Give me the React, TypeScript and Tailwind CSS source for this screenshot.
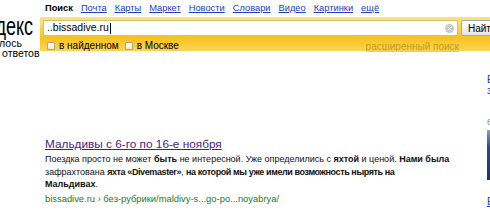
import { X } from 'lucide-react';

const navLinks = ['Почта', 'Карты', 'Маркет', 'Новости', 'Словари', 'Видео', 'Картинки'];

function Checkbox({ label }: { label: string }) {
  return (
    <label className="flex items-center gap-[4px] whitespace-nowrap">
      <span className="inline-block h-[8px] w-[8px] shrink-0 rounded-[1px] border border-[#b9a66a] bg-[linear-gradient(#fff,#ece6cf)]" />
      <span>{label}</span>
    </label>
  );
}

// bold words in the snippet are set narrower, like the original rendering
function B({ children, tight = false }: { children: React.ReactNode; tight?: boolean }) {
  return (
    <b
      className={
        tight
          ? "font-['Liberation_Sans_Narrow','Liberation_Sans',sans-serif] font-bold tracking-[-0.4px]"
          : "font-['Liberation_Sans_Narrow','Liberation_Sans',sans-serif] font-bold"
      }
    >
      {children}
    </b>
  );
}

export default function App() {
  return (
    <div className="relative h-[210px] w-[490px] overflow-hidden bg-white text-black font-['Liberation_Sans',Arial,sans-serif]">
      {/* header */}
      <div className="flex">
        <div className="w-[40px] shrink-0 overflow-hidden">
          <div className="mt-[15px] flex justify-end pr-[7px] whitespace-nowrap text-[25px] leading-[22px]">
            <span className="inline-block origin-right scale-x-[0.72] font-['Liberation_Sans_Narrow','Liberation_Sans',sans-serif]">
              Яндекс
            </span>
          </div>
          <div className="-ml-[21px] mt-[2px] whitespace-nowrap text-[10.5px] leading-[9px]">
            нашлось
          </div>
          <div className="-ml-[20px] whitespace-nowrap text-[10.5px] leading-[10px]">
            млн ответов
          </div>
        </div>
        <div className="flex-1">
          <nav className="flex h-[17px] items-center gap-[8px] whitespace-nowrap pl-[5px] text-[9.3px]">
            <span className="font-bold">Поиск</span>
            {navLinks.map((l) => (
              <a key={l} className="text-[#1a3dc1] underline">
                {l}
              </a>
            ))}
            <a className="text-[#1a3dc1] underline">ещё</a>
          </nav>
          <div className="h-[34px] border-t border-[#f3e39a] bg-[linear-gradient(#fbe07a_0px,#fbe07a_3px,#f6c21f_20px,#fcd65a_34px)] pl-[3px] pt-[2px]">
            <div className="flex items-center gap-[3px]">
              <div className="flex h-[16px] w-[415px] items-center border border-[#d9c06a] bg-white pl-[3px] pr-[3px] text-[10.5px]">
                <span>..bissadive.ru</span>
                <span className="ml-[1px] h-[11px] w-px bg-black" />
                <span className="ml-auto flex h-[9px] w-[9px] items-center justify-center rounded-full bg-[#c9c9c9]">
                  <X size={7} strokeWidth={3} className="text-white" />
                </span>
              </div>
              <button className="h-[16px] whitespace-nowrap rounded-[2px] border border-[#a9a9a9] bg-[linear-gradient(#ffffff,#e4e4e4)] px-[6px] text-[10px] leading-[13px]">
                Найти
              </button>
            </div>
            <div className="mt-[2px] flex w-[416px] items-center pl-[4px] text-[10px] leading-[12px]">
              <div className="flex gap-[6px]">
                <Checkbox label="в найденном" />
                <Checkbox label="в Москве" />
              </div>
              <a className="ml-auto mt-[3px] whitespace-nowrap text-[#c29b1d] underline decoration-[#e6c96a]">
                расширенный поиск
              </a>
            </div>
          </div>
        </div>
      </div>

      {/* body */}
      <div className="flex">
        <div className="w-[487px] shrink-0 whitespace-nowrap pl-[45px] pt-[79px]">
          <a className="block text-[11.8px] leading-[15px] text-[#4b1a8c] underline">
            Мальдивы с 6-го по 16-е ноября
          </a>
          <p className="mt-[1px] text-[9px] leading-[12.5px] text-[#111]">
            Поездка просто не может <B>быть</B> не интересной. Уже определились с <B>яхтой</B> и ценой. <B>Нами была</B>
            <br />
            зафрахтована <B tight>яхта «Divemaster»</B>, <B tight>на которой мы уже имели возможность нырять на</B>
            <br />
            <B>Мальдивах</B>.
          </p>
          <div className="mt-[1px] text-[9.4px] leading-[13px] text-[#1d7a1d]">
            bissadive.ru › без-рубрики/maldivy-s...go-po...noyabrya/
          </div>
        </div>
        <div className="flex shrink-0 flex-col pt-[16px] text-[10px] leading-[11px]">
          <span className="text-[#1a3dc1]">Е</span>
          <span className="text-[#1a3dc1]">з</span>
          <span className="mt-[20px] text-[#999]">e</span>
          <div className="mt-[3px] h-[50px] w-[10px] bg-[linear-gradient(#8aa0c0,#2c4c7c_35%,#1c3560)]" />
          <span className="mt-[16px] text-[#1a3dc1] underline">Е</span>
        </div>
      </div>
    </div>
  );
}
